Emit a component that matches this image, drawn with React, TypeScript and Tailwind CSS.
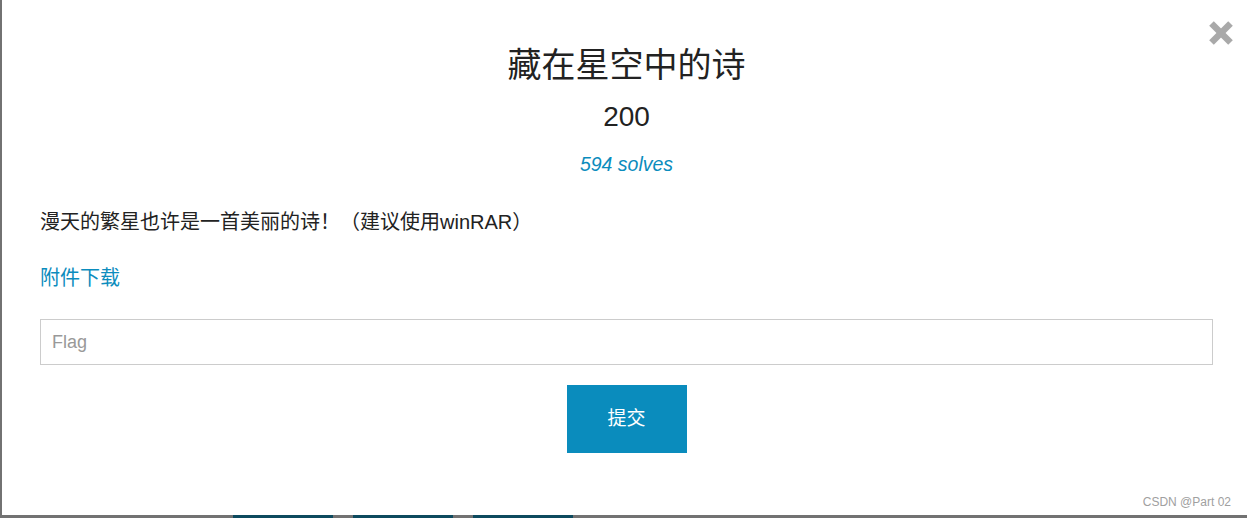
const FONT = "font-['Liberation_Sans','Noto_Sans_CJK_SC',sans-serif]";

function CloseIcon() {
  return (
    <svg width="24" height="24" viewBox="0 0 24 24" aria-hidden="true">
      <line x1="2.5" y1="2.5" x2="21.5" y2="21.5" stroke="#a9a9a9" strokeWidth="6.5" />
      <line x1="21.5" y1="2.5" x2="2.5" y2="21.5" stroke="#a9a9a9" strokeWidth="6.5" />
    </svg>
  );
}

export default function App() {
  return (
    <div className={`w-[1247px] h-[518px] bg-[#727272] flex flex-col overflow-hidden ${FONT}`}>
      <div className="flex-1 ml-[2px] bg-white relative pl-[38px] pr-[34px]">
        <button className="absolute right-[14px] top-[21px] w-[24px] h-[24px]" title="Close">
          <CloseIcon />
        </button>

        <h3 className="pt-[45px] text-center text-[34px] leading-[40px] text-[#222]">藏在星空中的诗</h3>
        <div className="mt-[16px] text-center text-[28px] leading-[32px] text-[#222]">200</div>
        <div className="mt-[19px] text-center text-[19.5px] leading-[24px] italic text-[#0b8cbd]">594 solves</div>

        <p className="mt-[32px] text-[20px] leading-[28px] text-[#222]">
          漫天的繁星也许是一首美丽的诗！（建议使用winRAR）
        </p>
        <a className="block mt-[28px] text-[20px] leading-[28px] text-[#0b8cbd]" href="#">附件下载</a>

        <input
          className="mt-[27px] block w-full h-[46px] border border-[#cccccc] px-[11px] text-[18px] text-[#333] placeholder:text-[#999] outline-none"
          placeholder="Flag"
        />
        <div className="flex justify-center mt-[20px]">
          <button className="w-[120px] h-[68px] bg-[#0a8cbd] text-white text-[19px]">提交</button>
        </div>

        <span className="absolute right-[16px] bottom-[6px] text-[12px] leading-[14px] text-[#a0a0a0]">CSDN @Part 02</span>
      </div>
      <div className="h-[3px] flex pl-[233px] gap-[20px]">
        <div className="w-[100px] bg-[#0d4a5e]" />
        <div className="w-[100px] bg-[#0d4a5e]" />
        <div className="w-[100px] bg-[#0d4a5e]" />
      </div>
    </div>
  );
}
